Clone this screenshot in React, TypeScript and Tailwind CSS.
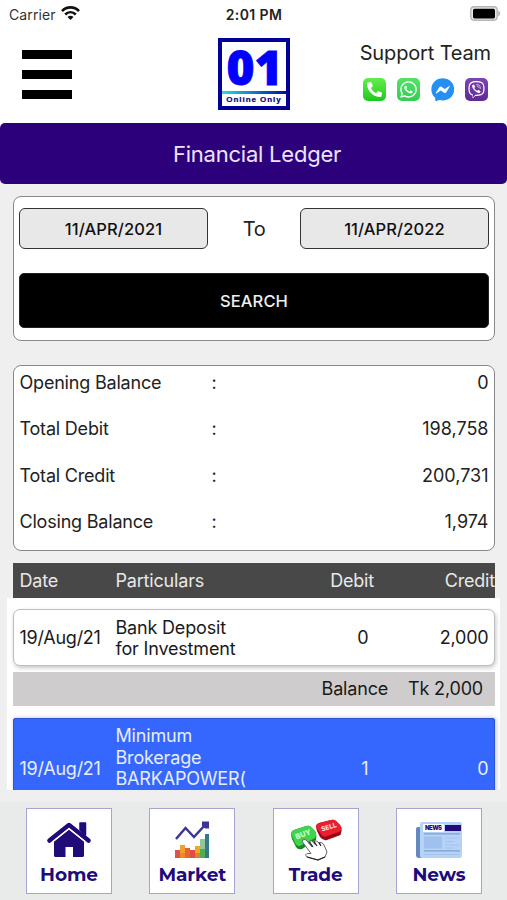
import type { ReactNode } from 'react';
import { FaFacebookMessenger, FaPhoneAlt, FaViber, FaWhatsapp } from 'react-icons/fa';

const summary = [
  { label: 'Opening Balance', value: '0' },
  { label: 'Total Debit', value: '198,758' },
  { label: 'Total Credit', value: '200,731' },
  { label: 'Closing Balance', value: '1,974' },
];

function StatusBar() {
  return (
    <div className="flex h-7 items-center justify-between pl-[9px] pr-2 text-black">
      <div className="flex w-[180px] items-center gap-1.5 text-[14px] tracking-[0.1px] text-[#333]">
        <span>Carrier</span>
        <svg width="19" height="15" viewBox="0 0 19 15" fill="none" stroke="#111" strokeWidth="2.7" className="-translate-x-px -translate-y-[1.5px]">
          <path d="M1 5.6C5.8 0.7 13.2 0.7 18 5.6" />
          <path d="M4.2 9C7.3 6 11.7 6 14.8 9" />
          <path d="M6.5 11.4C8.2 9.8 10.8 9.8 12.5 11.4L9.5 14.4Z" fill="#111" stroke="none" />
        </svg>
      </div>
      <span className="text-[14px] font-semibold tracking-[0.4px] text-[#222]">2:01 PM</span>
      <div className="flex w-[180px] justify-end">
        <svg width="31" height="15" viewBox="0 0 31 15" className="translate-x-[2px] -translate-y-px">
          <rect x="0.8" y="0.8" width="26.4" height="13.4" rx="3.4" fill="#e8e8e8" stroke="#b5b5b5" strokeWidth="1.4" />
          <rect x="3" y="2.8" width="22" height="9.6" rx="1.6" fill="#000" />
          <path d="M28.3 4.8C30.6 5.5 30.6 9.5 28.3 10.2Z" fill="#aaa" />
        </svg>
      </div>
    </div>
  );
}

function Header() {
  return (
    <header className="flex h-[95px] justify-between pl-[22px] pr-4">
      {/* Menu */}
      <div className="flex w-[196px] flex-col gap-[11px] pt-[21.5px]">
        <div className="h-[9px] w-[50px] bg-black"></div>
        <div className="h-[9px] w-[50px] bg-black"></div>
        <div className="h-[9px] w-[50px] bg-black"></div>
      </div>

      {/* Logo */}
      <div className="mt-[10px] flex h-[72px] w-[72px] flex-col border-4 border-[#000099] bg-white">
        <svg width="64" height="49" viewBox="0 0 64 49" className="shrink-0">
          <text x="32.500" y="42.500" textAnchor="middle" textLength="56" lengthAdjust="spacingAndGlyphs" fontFamily="Open Sans" fontWeight="800" fontSize="47" fill="#0000ff" stroke="#0000ff" strokeWidth="0.8">01</text>
        </svg>
        <div className="h-[3px] shrink-0 bg-linear-to-r from-[#22e0f0] via-[#1a78c8] to-[#000099]"></div>
        <div className="flex h-[12px] items-center justify-center whitespace-nowrap font-['Liberation_Sans'] text-[8px] font-black leading-none tracking-[0.95px] text-[#000077] [-webkit-text-stroke:0.2px_#000077]">
          Online Only
        </div>
      </div>

      {/* Support */}
      <div className="flex flex-1 flex-col items-end">
        <p className="mt-[11px] text-[20px] leading-7 tracking-[-0.15px] text-[#222]">Support Team</p>
        <div className="mt-[11px] mr-[3px] flex gap-[11px]">
          <div className="flex h-[23px] w-[23px] items-center justify-center rounded-[5px] bg-linear-to-b from-[#62ee4d] to-[#17c91c]">
            <FaPhoneAlt size={15} color="#fff" />
          </div>
          <div className="flex h-[23px] w-[23px] items-center justify-center rounded-[5px] bg-linear-to-b from-[#55e268] to-[#35cc52]">
            <FaWhatsapp size={19} color="#fff" />
          </div>
          <FaFacebookMessenger size={23.5} color="#2490f2" />
          <div className="flex h-[23px] w-[23px] items-center justify-center rounded-[5px] bg-linear-to-b from-[#7d45b4] to-[#5d2a91]">
            <FaViber size={17} color="#fff" />
          </div>
        </div>
      </div>
    </header>
  );
}

function DateField({ value }: { value: string }) {
  return (
    <button className="h-[41px] w-[189px] rounded-[6px] border-[1.5px] border-[#333] bg-[#e8e8e8] pt-px text-[16.5px] font-medium tracking-[0.1px] text-[#111]">
      {value}
    </button>
  );
}

function SearchPanel() {
  return (
    <section className="mr-3 ml-[13px] mt-3 flex h-[145px] flex-col rounded-lg border border-[#888] bg-white px-[5px] pt-[11px]">
      <div className="flex items-center justify-between">
        <DateField value="11/APR/2021" />
        <span className="text-[20px] tracking-[-0.3px] text-[#222]">To</span>
        <DateField value="11/APR/2022" />
      </div>
      <button className="mt-6 h-[55px] rounded-[5px] border border-[#222] bg-black pt-px text-[16.5px] font-medium tracking-[0.1px] text-[#eee]">
        SEARCH
      </button>
    </section>
  );
}

function SummaryPanel() {
  return (
    <section className="mr-3 ml-[13px] mt-6 h-[186px] rounded-lg border border-[#888] bg-white px-[5.5px] text-[18px] text-[#222]">
      {summary.map((row) => (
        <div key={row.label} className="flex h-[46.4px] pt-[4px] leading-[26px]">
          <span className="w-[192px] tracking-[-0.2px]">{row.label}</span>
          <span>:</span>
          <span className="ml-auto">{row.value}</span>
        </div>
      ))}
    </section>
  );
}

function LedgerTable() {
  return (
    <section className="mt-3 h-[227px] overflow-hidden px-[7px] text-[18px] tracking-[-0.18px]">
      <div className="mr-[5px] ml-[6px] flex h-[34.5px] items-center bg-[#484848] pl-[6.5px] text-[#e8e8e8]">
        <span className="w-[96px]">Date</span>
        <span className="w-[170px]">Particulars</span>
        <span className="w-[88.5px] text-right">Debit</span>
        <span className="flex-1 text-right">Credit</span>
      </div>
      <div className="h-full bg-white pl-[6px] pr-[5px] pt-[11.5px] leading-[21.5px]">
        <div className="flex h-[57px] items-center rounded-[7px] border border-[#bdbdbd] bg-white px-[5.5px] text-[#1a1a1a] shadow-[1px_2px_4px_rgba(0,0,0,0.22)]">
          <span className="w-[96px] tracking-[-0.25px]">19/Aug/21</span>
          <span className="w-[170px] pt-px">Bank Deposit<br />for Investment</span>
          <span className="w-[83px] text-right">0</span>
          <span className="flex-1 text-right">2,000</span>
        </div>
        <div className="mt-[6px] flex h-[34px] items-center justify-end gap-5 bg-[#cfcccd] pr-[12px] text-[#1a1a1a]">
          <span>Balance</span>
          <span>Tk 2,000</span>
        </div>
        <div className="mt-3 flex h-[101px] items-center rounded-t-[2px] border border-[#2b55d4] bg-[#3567ff] px-[5.5px] text-[#e8edff] shadow-[1px_0_4px_rgba(0,0,0,0.25)]">
          <span className="w-[96px] tracking-[-0.25px]">19/Aug/21</span>
          <span className="-mt-px w-[170px] pb-[21.5px]">Minimum<br />Brokerage<br />BARKAPOWER(</span>
          <span className="w-[83px] text-right">1</span>
          <span className="flex-1 text-right">0</span>
        </div>
      </div>
    </section>
  );
}

function HomeIcon() {
  return (
    <svg width="46" height="38" viewBox="0 0 46 38" fill="#210b79">
      <path d="M34 2H39.5V14L34 9Z" stroke="#210b79" strokeWidth="1.5" strokeLinejoin="round" />
      <path d="M3.5 19.5L23 4L42.5 19.5" fill="none" stroke="#210b79" strokeWidth="4.6" strokeLinecap="round" strokeLinejoin="round" />
      <path d="M8 20.5L23 8.5L38 20.5V34.5Q38 36 36.5 36H27V26H19.5V36H9.5Q8 36 8 34.5Z" />
      <path d="M7 20.5L23 7.6L39 20.5" fill="none" stroke="#fff" strokeWidth="1.4" />
    </svg>
  );
}

function MarketIcon() {
  return (
    <svg width="38" height="40" viewBox="0 0 38 40">
      <rect x="2" y="30" width="5" height="8" fill="#d9534f" />
      <rect x="7" y="25" width="5" height="13" fill="#f0a030" />
      <rect x="12" y="28" width="5" height="10" fill="#e8642f" />
      <rect x="17" y="30" width="5" height="8" fill="#dd4f45" />
      <rect x="22" y="26" width="5" height="12" fill="#f2a51f" />
      <rect x="7" y="33" width="5" height="5" fill="#e98b25" />
      <rect x="22" y="33" width="5" height="5" fill="#ec7a2b" />
      <rect x="27" y="19" width="5" height="19" fill="#93c695" />
      <rect x="27" y="29" width="5" height="9" fill="#4cb050" />
      <rect x="32" y="14" width="4" height="24" fill="#39788a" />
      <path d="M3 19L12.5 8L21 17L32 5" fill="none" stroke="#3d3591" strokeWidth="2.5" />
      <path d="M29 1.5H36V8.5H32L29 5.5Z" fill="#3d3591" />
    </svg>
  );
}

function TradeIcon() {
  return (
    <svg width="54" height="42" viewBox="0 0 54 42" strokeLinejoin="round">
      <path d="M2 16Q2 12 5 11L17 7Q20 6 22 8L26 12Q28 15 27 21L13 30Q9 31 7 28L3 20Z" fill="#14861f" />
      <path d="M2 15Q2 12 5 11L17 7Q20 6 22 8L26 12Q28 16 26 19L11 27Q8 28 6 24Z" fill="#42d34c" />
      <path d="M27 8Q27 5 30 4L42 1Q45 0 47 2L51 6Q53 8 52.500 12L51.500 16L38 21Q34 22 31 18L28 12Z" fill="#9d0712" />
      <path d="M27 8Q27 5 30 4L42 1Q45 0 47 2L51 6Q54 10 50 13L38 17Q34 19 32 15Z" fill="#e8202f" />
      <text x="0" y="0" transform="translate(7.500 20.500) rotate(-20)" fontFamily="Inter" fontSize="7.500" fontWeight="800" fill="#c9ffc9">BUY</text>
      <text x="0" y="0" transform="translate(33 12.500) rotate(-17)" fontFamily="Inter" fontSize="6.500" fontWeight="800" fill="#ffdcdc">SELL</text>
      <path d="M13.500 23Q13 20.500 15 20.500Q17 20.500 18 22L23 28L20.500 23Q21 21 23 22L26 25.500L25 22.500Q27 21 29 23L31 25.500L30.500 23.500Q33 22.500 35 26L38 33L36 38L29 41L18 38Q15 35 19 34.500L22 34.500Z" fill="#fff" stroke="#666" strokeWidth="1" />
      <path d="M20.500 23L24 28M25 22.500L28 27M30 23.500L32 27M18 38L29 41L36 38" fill="none" stroke="#222" strokeWidth="1.2" />
    </svg>
  );
}

function NewsIcon() {
  return (
    <svg width="48" height="38" viewBox="0 0 48 38">
      <path d="M1 8Q1 6 3 6H8V37H4Q1 37 1 34Z" fill="#6588bc" />
      <rect x="5" y="1" width="42" height="36" rx="2" fill="#b7d2f7" />
      <rect x="8" y="3" width="21" height="8" rx="1" fill="#fff" />
      <text x="18.500" y="9.400" textAnchor="middle" textLength="17" fontFamily="Inter" fontSize="6" fontWeight="900" fill="#210b79">NEWS</text>
      <rect x="30" y="4" width="16" height="6" fill="#210b79" />
      <path d="M9 12.800H45M9 29.800H45" stroke="#7fa0ce" strokeWidth="1.300" />
      <rect x="9" y="15.500" width="18" height="12" fill="#a0c1ed" />
      <path d="M30 17H44M30 20.500H39M30 24H44M30 27H39M9 33.500H44" stroke="#a3c1ea" strokeWidth="1.200" />
    </svg>
  );
}

function Tile({ label, children }: { label: string; children: ReactNode }) {
  return (
    <div className="flex h-[86px] w-[86px] flex-col items-center border border-[#aaa2d0] bg-white pt-[9.5px] font-['Montserrat',Inter,sans-serif] text-[18.5px] font-bold leading-6 text-[#210b79]">
      <div className="flex h-[42px] items-center">{children}</div>
      <span className="mt-[2.5px] tracking-[-0.1px]">{label}</span>
    </div>
  );
}

export default function App() {
  return (
    <main className="flex h-[900px] w-[507px] flex-col overflow-hidden bg-[#efefef] font-[Inter,sans-serif]">
      <div className="bg-white">
        <StatusBar />
        <Header />
      </div>
      <div className="bg-linear-to-b from-white from-50% to-[#efefef] to-50%">
        <h1 className="flex h-[61px] items-center justify-center rounded-[5px] bg-[#2b007a] pl-[7px] pt-px text-[22px] tracking-[-0.22px] text-[#eee4ff]">
          Financial Ledger
        </h1>
      </div>
      <SearchPanel />
      <SummaryPanel />
      <LedgerTable />

      {/* Bottom navigation */}
      <nav className="mt-auto flex h-[98px] justify-between bg-[#e8ebea] pl-[26px] pr-[25px] pt-[6px]">
        <Tile label="Home"><HomeIcon /></Tile>
        <Tile label="Market"><MarketIcon /></Tile>
        <Tile label="Trade"><TradeIcon /></Tile>
        <Tile label="News"><NewsIcon /></Tile>
      </nav>
    </main>
  );
}
